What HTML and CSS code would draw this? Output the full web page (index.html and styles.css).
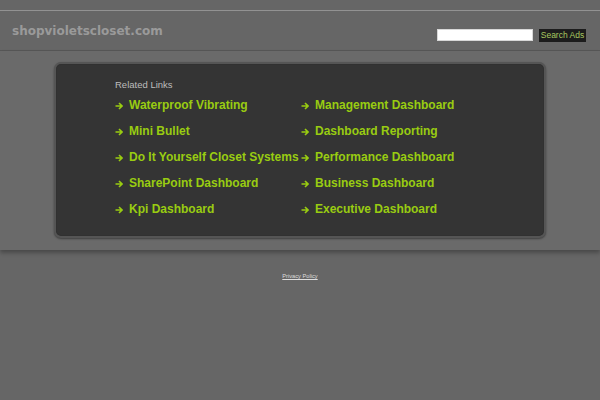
FILE: index.html
```html
<!DOCTYPE html>
<html>
<head>
<meta charset="utf-8">
<title>shopvioletscloset.com</title>
<link rel="stylesheet" href="styles.css">
</head>
<body>
<div class="topbar"></div>
<div class="header">
  <div class="site-name">shopvioletscloset.com</div>
  <form class="search">
    <input class="search-input" type="text">
    <button class="search-btn" type="button">Search Ads</button>
  </form>
</div>
<div class="band">
  <div class="box">
    <div class="related">Related Links</div>
    <div class="links">
      <a class="link" href="#"><svg class="arrow" viewBox="0 0 8 8"><path d="M0.5 4H7M4 1L7 4L4 7"/></svg>Waterproof Vibrating</a>
      <a class="link" href="#"><svg class="arrow" viewBox="0 0 8 8"><path d="M0.5 4H7M4 1L7 4L4 7"/></svg>Management Dashboard</a>
      <a class="link" href="#"><svg class="arrow" viewBox="0 0 8 8"><path d="M0.5 4H7M4 1L7 4L4 7"/></svg>Mini Bullet</a>
      <a class="link" href="#"><svg class="arrow" viewBox="0 0 8 8"><path d="M0.5 4H7M4 1L7 4L4 7"/></svg>Dashboard Reporting</a>
      <a class="link" href="#"><svg class="arrow" viewBox="0 0 8 8"><path d="M0.5 4H7M4 1L7 4L4 7"/></svg>Do It Yourself Closet Systems</a>
      <a class="link" href="#"><svg class="arrow" viewBox="0 0 8 8"><path d="M0.5 4H7M4 1L7 4L4 7"/></svg>Performance Dashboard</a>
      <a class="link" href="#"><svg class="arrow" viewBox="0 0 8 8"><path d="M0.5 4H7M4 1L7 4L4 7"/></svg>SharePoint Dashboard</a>
      <a class="link" href="#"><svg class="arrow" viewBox="0 0 8 8"><path d="M0.5 4H7M4 1L7 4L4 7"/></svg>Business Dashboard</a>
      <a class="link" href="#"><svg class="arrow" viewBox="0 0 8 8"><path d="M0.5 4H7M4 1L7 4L4 7"/></svg>Kpi Dashboard</a>
      <a class="link" href="#"><svg class="arrow" viewBox="0 0 8 8"><path d="M0.5 4H7M4 1L7 4L4 7"/></svg>Executive Dashboard</a>
    </div>
  </div>
</div>
<div class="footer"><a class="privacy" href="#">Privacy Policy</a></div>
</body>
</html>
```
FILE: styles.css
```css
html, body {
  margin: 0;
  padding: 0;
  background: #666666;
  font-family: "Liberation Sans", Arial, sans-serif;
}
.topbar {
  height: 10px;
  border-bottom: 1px solid #929292;
}
.header {
  height: 39px;
  border-bottom: 1px solid #575757;
  display: flex;
  align-items: center;
  justify-content: space-between;
  padding: 0 14px 0 12px;
}
.site-name {
  font-family: "DejaVu Sans", Verdana, sans-serif;
  font-weight: bold;
  font-size: 12px;
  color: #9a9a9a;
}
.search {
  display: flex;
  align-items: center;
  gap: 6px;
  margin: 9px 0 0 0;
}
.search-input {
  width: 96px;
  height: 12px;
  box-sizing: border-box;
  border: 1px solid #d8d8d8;
  background: #fff;
  padding: 0;
  margin: 0;
}
.search-btn {
  height: 13px;
  width: 47px;
  padding: 0;
  margin: 0;
  border: none;
  background: #1c1c1c;
  color: #a8c860;
  font-family: "Liberation Sans", Arial, sans-serif;
  font-size: 8.5px;
  line-height: 13px;
}
.band {
  background: #6a6a6a;
  padding: 11px 0 12px 54px;
  box-shadow: 0 3px 4px rgba(0, 0, 0, 0.28);
  position: relative;
}
.box {
  width: 492px;
  height: 176px;
  box-sizing: border-box;
  background: #343434;
  border: 2px solid #555555;
  border-radius: 7px;
  box-shadow: 0 1px 2px rgba(0, 0, 0, 0.4), inset 0 0 1px rgba(0,0,0,0.5);
  padding: 15px 0 0 59px;
}
.related {
  font-size: 9.5px;
  color: #bdbdbd;
  line-height: 12px;
  margin-bottom: 4px;
}
.links {
  display: grid;
  grid-template-columns: 186px auto;
  grid-auto-rows: 26px;
}
.link {
  font-weight: bold;
  font-size: 12px;
  color: #99cc11;
  text-decoration: none;
  white-space: nowrap;
  line-height: 20px;
}
.arrow {
  width: 8px;
  height: 8px;
  margin-right: 6px;
  vertical-align: -0.5px;
  fill: none;
  stroke: currentColor;
  stroke-width: 1.6;
}
.footer {
  text-align: center;
  padding-top: 18px;
  line-height: 10px;
}
.privacy {
  font-size: 5.7px;
  color: #dddddd;
  text-decoration: underline;
}
```
